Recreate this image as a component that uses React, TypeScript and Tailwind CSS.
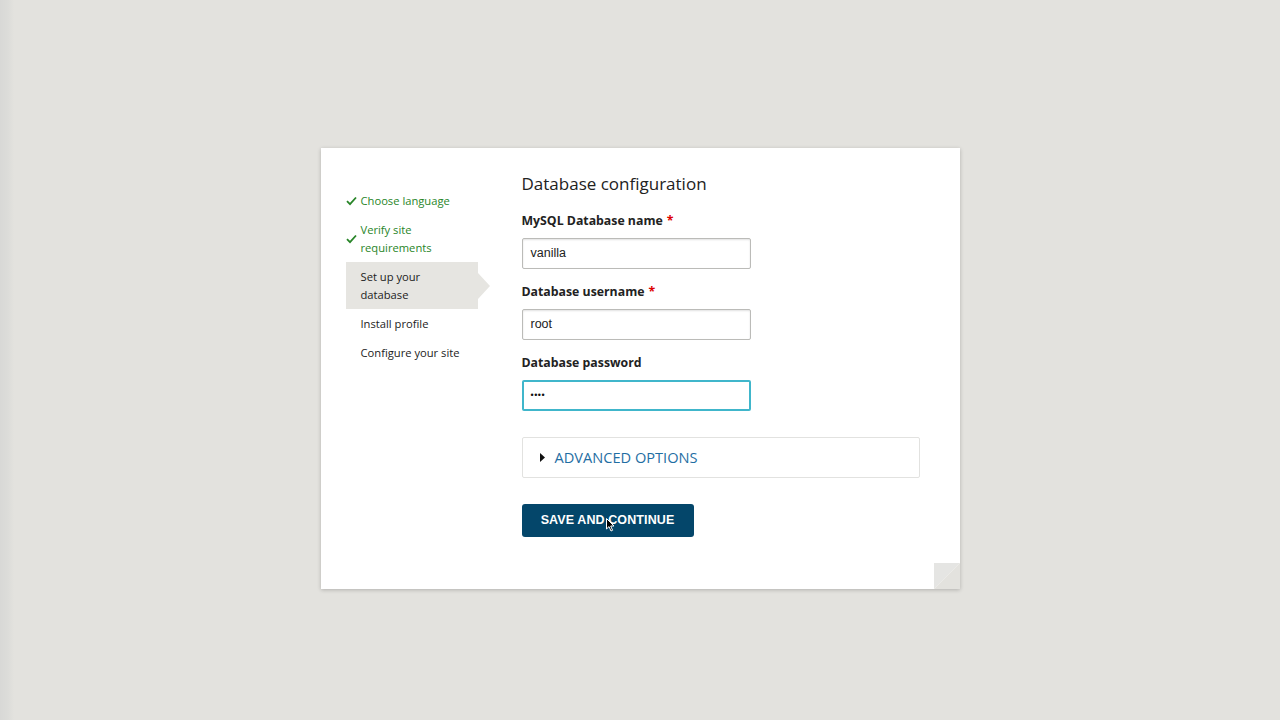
import React from 'react';

const steps = [
  { label: 'Choose language', done: true },
  { label: 'Verify site requirements', done: true, lines: ['Verify site', 'requirements'] },
  { label: 'Set up your database', active: true, lines: ['Set up your', 'database'] },
  { label: 'Install profile' },
  { label: 'Configure your site' },
];

const Check = () => (
  <svg width="11" height="10" viewBox="0 0 11 10" className="absolute left-0 top-1/2 -translate-y-1/2">
    <path d="M1 5.2 L4 8.2 L10 1.5" fill="none" stroke="#288528" strokeWidth="1.8" />
  </svg>
);

const Field = ({ label, value, required, focused, password }: { label: string; value: string; required?: boolean; focused?: boolean; password?: boolean }) => (
  <div className="flex flex-col">
    <label className="text-[12.3px] leading-[18px] font-bold text-[#222]">
      {label}
      {required && <span className="text-[#d00] ml-1">*</span>}
    </label>
    <div
      className={`mt-2 w-[229px] h-[31px] rounded-[2px] flex items-center px-2 bg-white ${
        focused
          ? 'border-2 border-[#40b6cb] px-[7px]'
          : 'border border-[#bbbbb8] shadow-[inset_0_1px_2px_rgba(0,0,0,0.12)]'
      }`}
    >
      {password ? (
        <span className="text-[9px] tracking-[0.5px] text-[#111] font-['Liberation_Sans',Arial,sans-serif]">{value}</span>
      ) : (
        <span className="text-[12.5px] text-[#222] font-['Liberation_Sans',Arial,sans-serif]">{value}</span>
      )}
    </div>
  </div>
);

export default function App() {
  return (
    <div className="w-[1280px] h-[720px] overflow-hidden bg-[linear-gradient(to_right,#d8d8d6_0px,#dcdcd9_8px,#e3e2de_14px,#e3e2de_100%)] flex justify-center pt-[148px] font-['Open_Sans','Noto_Sans',sans-serif]">
      <div className="relative w-[639px] h-[441px] bg-white shadow-[0_1px_4px_rgba(0,0,0,0.22)] flex pl-[25px] pt-6">
        {/* step list */}
        <div className="w-[176px] shrink-0 mt-[14px]">
          <ul className="w-[132px]">
            {steps.map((s) => (
              <li
                key={s.label}
                className={`relative pt-[6px] pb-[5px] pl-[15px] pr-2 text-[11.2px] leading-[18px] ${
                  s.done ? 'text-[#288528]' : 'text-[#222]'
                } ${s.active ? 'bg-[#e6e5e1]' : ''}`}
              >
                {s.done && <Check />}
                {s.lines ? s.lines.map((l) => <div key={l}>{l}</div>) : s.label}
                {s.active && (
                  <span className="absolute -right-3 top-1/2 -translate-y-1/2 w-0 h-0 border-y-[13px] border-y-transparent border-l-[12px] border-l-[#e6e5e1]" />
                )}
              </li>
            ))}
          </ul>
        </div>

        {/* form */}
        <div className="flex flex-col">
          <h1 className="text-[17px] leading-6 text-[#222] font-normal">Database configuration</h1>
          <div className="mt-[16px] flex flex-col gap-[14px]">
            <Field label="MySQL Database name" value="vanilla" required />
            <Field label="Database username" value="root" required />
            <Field label="Database password" value="••••" focused password />
          </div>

          <div className="mt-[26px] w-[398px] h-[41px] border border-[#e2e2e0] rounded-[2px] flex items-center pl-[17px]">
            <svg width="5" height="9" viewBox="0 0 5 9">
              <path d="M0 0 L5 4.5 L0 9 Z" fill="#111" />
            </svg>
            <span className="ml-[10px] text-[14.6px] text-[#1f6ea3]">ADVANCED OPTIONS</span>
          </div>

          <div className="mt-[26px]">
            <button className="relative w-[172px] h-[33px] rounded-[3px] bg-[#04466a] text-white text-[12.5px] font-bold font-['Liberation_Sans',Arial,sans-serif] tracking-[0.1px]">
              SAVE AND CONTINUE
              <svg width="9" height="14" viewBox="0 0 9 14" className="absolute left-[84px] top-[14px]">
                <path d="M0.5 0.5 L0.5 11 L3 8.6 L5 13 L6.6 12.3 L4.7 8 L8 8 Z" fill="#000" stroke="#fff" strokeWidth="1" />
              </svg>
            </button>
          </div>
        </div>

        {/* folded corner */}
        <svg width="26" height="26" viewBox="0 0 26 26" className="absolute right-0 bottom-0">
          <path d="M0 0 L26 0 L0 26 Z" fill="#e5e5e3" />
          <path d="M26 0 L26 26 L0 26 Z" fill="#e3e2de" />
        </svg>
      </div>
    </div>
  );
}
